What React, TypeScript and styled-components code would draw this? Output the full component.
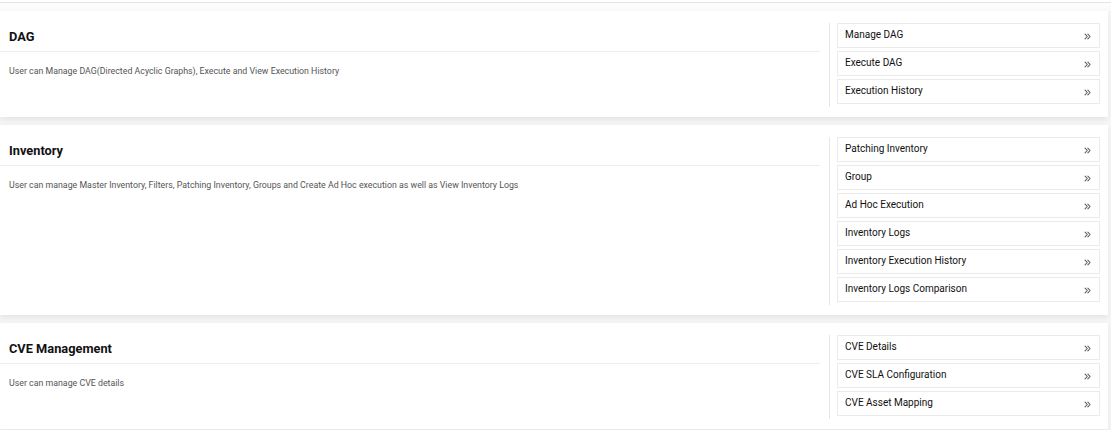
import React from "react";
import styled, { createGlobalStyle } from "styled-components";

const Global = createGlobalStyle`
  html, body { margin: 0; padding: 0; background: #f6f6f6; }
  body { font-family: Roboto, "Noto Sans", Arial, sans-serif; color: #222; }
`;

const Page = styled.div`
  display: flex;
  flex-direction: column;
  gap: 8px;
  padding-bottom: 20px;
`;

const TopEdge = styled.div`
  height: 2px;
  background: #fff;
  border-bottom: 1px solid #e4e4e4;
`;

const TopGap = styled.div`
  height: 8px;
  background: linear-gradient(#fdfdfd, #f9f9f9);
`;

const Card = styled.section`
  background: #fff;
  margin-right: 3px;
  padding: 12px 8px 10px 0;
  display: grid;
  grid-template-columns: 1fr 271px;
  column-gap: 9px;
  box-shadow: 0 3px 6px rgba(0, 0, 0, 0.07);
  align-items: start;
`;

const Info = styled.div`
  display: flex;
  flex-direction: column;
`;

const Title = styled.h2`
  margin: 0;
  padding-left: 9px;
  font-size: 12.8px;
  font-weight: 700;
  line-height: 28px;
  color: #111;
  border-bottom: 1px solid #ececec;
`;

const Desc = styled.p`
  margin: 13px 0 0;
  padding-left: 9px;
  font-size: 8.8px;
  line-height: 12px;
  color: #555;
`;

const Links = styled.div`
  border-left: 1px solid #e6e6e6;
  padding-left: 7px;
  display: flex;
  flex-direction: column;
  gap: 3px;
  padding-bottom: 3px;
`;

const LinkRow = styled.a`
  display: flex;
  align-items: center;
  justify-content: space-between;
  height: 25px;
  box-sizing: border-box;
  border: 1px solid #ebebeb;
  padding: 0 8px 0 7px;
  font-size: 10px;
  color: #111;
  text-decoration: none;
  cursor: pointer;
`;

const Label = styled.span`
  line-height: 14px;
  margin-top: -2px;
`;

const Chevrons = styled.svg`
  width: 7px;
  height: 7px;
  margin-top: 1px;
  flex: none;
`;

const Icon = () => (
  <Chevrons viewBox="0 0 8 8" fill="none" stroke="#5a5a5a" strokeWidth="1.2" strokeLinecap="round" strokeLinejoin="round">
    <path d="M1.2 1.2 L3.8 4 L1.2 6.8" />
    <path d="M4.4 1.2 L7 4 L4.4 6.8" />
  </Chevrons>
);

type Section = { title: string; desc: string; links: string[] };

const sections: Section[] = [
  {
    title: "DAG",
    desc: "User can Manage DAG(Directed Acyclic Graphs), Execute and View Execution History",
    links: ["Manage DAG", "Execute DAG", "Execution History"],
  },
  {
    title: "Inventory",
    desc: "User can manage Master Inventory, Filters, Patching Inventory, Groups and Create Ad Hoc execution as well as View Inventory Logs",
    links: [
      "Patching Inventory",
      "Group",
      "Ad Hoc Execution",
      "Inventory Logs",
      "Inventory Execution History",
      "Inventory Logs Comparison",
    ],
  },
  {
    title: "CVE Management",
    desc: "User can manage CVE details",
    links: ["CVE Details", "CVE SLA Configuration", "CVE Asset Mapping"],
  },
];

export default function App() {
  return (
    <>
      <Global />
      <TopEdge />
      <TopGap />
      <Page>
        {sections.map((s) => (
          <Card key={s.title}>
            <Info>
              <Title>{s.title}</Title>
              <Desc>{s.desc}</Desc>
            </Info>
            <Links>
              {s.links.map((l) => (
                <LinkRow key={l}>
                  <Label>{l}</Label>
                  <Icon />
                </LinkRow>
              ))}
            </Links>
          </Card>
        ))}
      </Page>
    </>
  );
}
